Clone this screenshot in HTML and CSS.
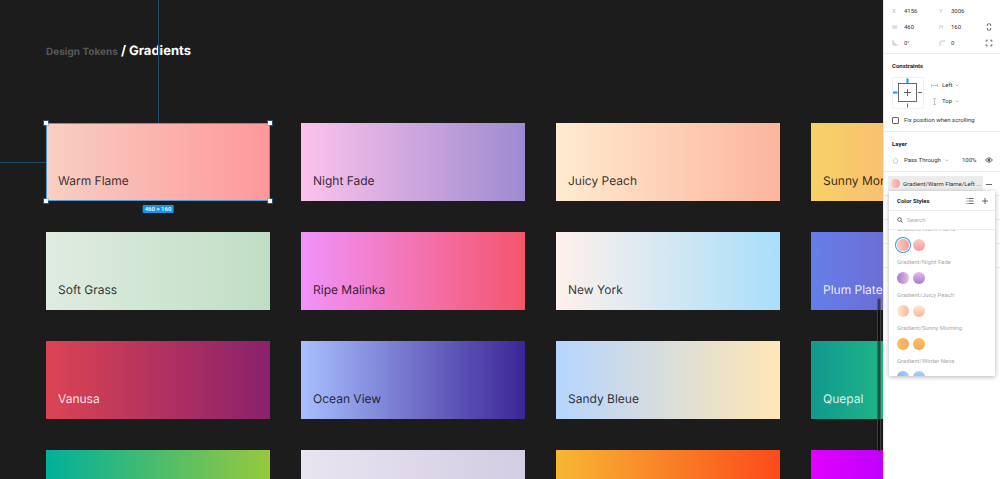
FILE: index.html
```
<!DOCTYPE html>
<html lang="en">
<head>
<meta charset="utf-8">
<title>Design Tokens / Gradients</title>
<link rel="stylesheet" href="styles.css">
</head>
<body>
<div class="app">
  <main class="canvas">
    <h1 class="title"><span class="title-group">Design Tokens</span> / Gradients</h1>
    <div class="cards">
      <div class="card warm-flame selected">Warm Flame
        <i class="guide guide-top"></i><i class="guide guide-left"></i>
        <i class="handle tl"></i><i class="handle tr"></i><i class="handle bl"></i><i class="handle br"></i>
        <span class="size-badge">460 × 160</span>
      </div>
      <div class="card night-fade">Night Fade</div>
      <div class="card juicy-peach">Juicy Peach</div>
      <div class="card sunny-morning">Sunny Morning</div>
      <div class="card soft-grass">Soft Grass</div>
      <div class="card ripe-malinka">Ripe Malinka</div>
      <div class="card new-york">New York</div>
      <div class="card plum-plate light">Plum Plate</div>
      <div class="card vanusa light">Vanusa</div>
      <div class="card ocean-view">Ocean View</div>
      <div class="card sandy-bleue">Sandy Bleue</div>
      <div class="card quepal light">Quepal</div>
      <div class="card green-lime"></div>
      <div class="card lilac"></div>
      <div class="card orange-red"></div>
      <div class="card magenta"></div>
    </div>
    <div class="scrollbar"></div>
  </main>

  <aside class="panel">
    <section class="section props">
      <label class="prop"><span>X</span><input value="4156"></label>
      <label class="prop"><span>Y</span><input value="3006"></label>
      <i></i>
      <label class="prop"><span>W</span><input value="460"></label>
      <label class="prop"><span>H</span><input value="160"></label>
      <button class="icon-btn" aria-label="Constrain proportions"><svg width="8" height="8" viewBox="0 0 8 8"><path d="M2.300 3V2a1.200 1.200 0 0 1 1.200-1.200h1A1.200 1.200 0 0 1 5.700 2v1M2.300 5v1a1.200 1.200 0 0 0 1.200 1.200h1A1.200 1.200 0 0 0 5.700 6V5"/></svg></button>
      <label class="prop"><span><svg class="faint" width="6" height="6" viewBox="0 0 6 6"><path d="M1 0v5h5M1 2.500a2.500 2.500 0 0 1 2.500 2.500"/></svg></span><input value="0°" aria-label="Rotation"></label>
      <label class="prop"><span><svg class="faint" width="6" height="6" viewBox="0 0 6 6"><path d="M1 6V3a2 2 0 0 1 2-2h3"/></svg></span><input value="0" aria-label="Corner radius"></label>
      <button class="icon-btn" aria-label="Independent corners"><svg width="8" height="8" viewBox="0 0 8 8"><path d="M1.200 2.800V1.200h1.600M5.200 1.200h1.600v1.600M6.800 5.200v1.600H5.200M2.800 6.800H1.200V5.200"/></svg></button>
    </section>

    <section class="section">
      <h2 class="heading">Constraints</h2>
      <div class="constraints">
        <svg class="widget" width="32" height="32" viewBox="0 0 32 32"><rect class="frame" x=".5" y=".5" width="31" height="31" rx="1"/><rect x="6.500" y="6.500" width="18" height="18"/><path d="M12 15.500h7M15.500 12v7M26 15.500h4M15.500 26.500v4"/><path class="active" d="M1 15.500h4.500M15.500 1.500V6"/></svg>
        <div class="constraint-list">
          <button class="drop"><svg class="faint" width="7" height="7" viewBox="0 0 7 7"><path d="M.5 2v3M6.500 2v3M.5 3.500h6"/></svg>Left<svg class="chevron" width="4" height="4" viewBox="0 0 4 4"><path d="M.5 1.500 2 3l1.500-1.500"/></svg></button>
          <button class="drop"><svg class="faint" width="7" height="7" viewBox="0 0 7 7"><path d="M2 .5h3M2 6.500h3M3.500.5v6"/></svg>Top<svg class="chevron" width="4" height="4" viewBox="0 0 4 4"><path d="M.5 1.500 2 3l1.500-1.500"/></svg></button>
        </div>
      </div>
      <label class="fix"><input type="checkbox">Fix position when scrolling</label>
    </section>

    <section class="section layer">
      <h2 class="heading">Layer</h2>
      <div class="layer-row">
        <button class="drop blend"><svg class="faint" width="7" height="7" viewBox="0 0 7 7"><path d="M3.500.8C4.500 2 5.600 3 5.600 4.300a2.100 2.100 0 0 1-4.200 0C1.400 3 2.500 2 3.500.8z"/></svg>Pass Through<svg class="chevron" width="4" height="4" viewBox="0 0 4 4"><path d="M.5 1.500 2 3l1.500-1.500"/></svg></button>
        <input class="opacity" value="100%" aria-label="Opacity">
        <button class="icon-btn" aria-label="Toggle visibility"><svg width="8" height="8" viewBox="0 0 8 8"><path d="M.6 4C2.200 1.200 5.800 1.200 7.400 4 5.800 6.800 2.200 6.800.6 4z"/><circle class="solid" cx="4" cy="4" r="1"/></svg></button>
      </div>
    </section>

    <section class="fill">
      <button class="fill-chip"><i class="swatch warm-flame"></i>Gradient/Warm Flame/Left ...</button>
      <button class="icon-btn" aria-label="Detach style"><svg width="8" height="8" viewBox="0 0 8 8"><path d="M1 4.500h6"/></svg></button>

      <div class="popover">
        <header class="pop-head">
          <h2 class="heading">Color Styles</h2>
          <button class="icon-btn" aria-label="List view"><svg width="8" height="8" viewBox="0 0 8 8"><path d="M2.500 1.500h5M2.500 4h5M2.500 6.500h5M.5 1.500h1M.5 4h1M.5 6.500h1"/></svg></button>
          <button class="icon-btn" aria-label="Add style"><svg width="8" height="8" viewBox="0 0 8 8"><path d="M1 4h6M4 1v6"/></svg></button>
        </header>
        <label class="search"><svg width="6" height="6" viewBox="0 0 6 6"><circle cx="2.500" cy="2.500" r="1.800"/><path d="m4 4 1.700 1.700"/></svg><input type="search" placeholder="Search" aria-label="Search"></label>
        <div class="styles">
          <div class="group"><h3>Gradient/Warm Flame</h3><div class="pair"><button class="swatch warm-flame current" aria-label="Left"></button><button class="swatch warm-flame down" aria-label="Down"></button></div></div>
          <div class="group"><h3>Gradient/Night Fade</h3><div class="pair"><button class="swatch night" aria-label="Left"></button><button class="swatch night up" aria-label="Down"></button></div></div>
          <div class="group"><h3>Gradient/Juicy Peach</h3><div class="pair"><button class="swatch juicy-peach" aria-label="Left"></button><button class="swatch juicy-peach down" aria-label="Down"></button></div></div>
          <div class="group"><h3>Gradient/Sunny Morning</h3><div class="pair"><button class="swatch sunny" aria-label="Left"></button><button class="swatch sunny down" aria-label="Down"></button></div></div>
          <div class="group"><h3>Gradient/Winter Neva</h3><div class="pair"><button class="swatch neva" aria-label="Left"></button><button class="swatch neva up" aria-label="Down"></button></div></div>
        </div>
      </div>
    </section>
    <div class="empty-row"></div>
    <div class="empty-row"></div>
    <div class="empty-row"></div>
  </aside>
</div>
</body>
</html>
```
FILE: styles.css
```
* { box-sizing: border-box; }
body { margin: 0; font-family: Inter, "Liberation Sans", sans-serif; }
h1, h2, h3 { margin: 0; }
button, input { font: inherit; color: inherit; border: 0; padding: 0; margin: 0; background: none; }
svg { display: block; flex: none; fill: none; stroke: #444; stroke-width: .8; }

.app { display: flex; height: 100vh; overflow: hidden; }

/* Canvas */
.canvas { position: relative; flex: 1; min-width: 0; overflow: hidden; background: #1c1c1c; padding: 43px 0 0 46px; text-rendering: geometricPrecision; }
.title { color: #fff; font-size: 13px; line-height: 16px; font-weight: 700; white-space: nowrap; }
.title-group { color: #585858; font-size: 10px; }
.cards { display: grid; grid-template-columns: repeat(4, 224px); grid-auto-rows: 78px; gap: 31px; margin-top: 64px; }
.card {
  --dir: to right;
  position: relative; display: flex; align-items: flex-end; padding: 0 12px 12px;
  background: linear-gradient(var(--dir), var(--from), var(--to));
  color: rgba(0, 0, 0, .8); font-size: 12px; line-height: 16px;
}
.title + .cards { margin-top: 63px; }
.card.light { color: rgba(255, 255, 255, .87); }

.warm-flame { --from: #f8d0c2; --to: #ff979b; }
.night-fade { --from: #fdc2ec; --to: #9d8bd0; }
.juicy-peach { --from: #ffebd0; --to: #fcb49d; }
.sunny-morning { --from: #f7d166; --to: #fb9c88; }
.soft-grass { --from: #dfece0; --to: #c0dec4; }
.ripe-malinka { --from: #f093fb; --to: #f5556c; }
.new-york { --from: #fff0eb; --to: #a8dffb; }
.plum-plate { --from: #667eea; --to: #764ba2; }
.vanusa { --from: #dc4453; --to: #89216b; }
.ocean-view { --from: #a8bfff; --to: #3c2596; }
.sandy-bleue { --from: #b5d5ff; --to: #ffe6b5; }
.quepal { --from: #11998e; --to: #38ef7d; }
.green-lime { --from: #00b09b; --to: #96c93d; }
.lilac { --from: #e9e4f0; --to: #d3cce3; }
.orange-red { --from: #f7b733; --to: #fc4a1a; }
.magenta { --from: #e100ff; --to: #7f00ff; }
.night { --from: #a080ca; --to: #edb8e8; }
.sunny { --from: #f8c45c; --to: #f3a55e; }
.neva { --from: #84b3f8; --to: #aad2fb; }

.selected { outline: 1px solid #4c9fdb; outline-offset: -1px; }
.guide { position: absolute; background: #1d4b69; }
.guide-top { left: 50%; bottom: 100%; width: 1px; height: 100vh; }
.guide-left { right: 100%; top: 50%; width: 100vw; height: 1px; }
.handle { position: absolute; width: 4px; height: 4px; background: #fff; box-shadow: 0 0 0 1px rgba(76, 159, 219, .4); }
.tl { left: -2px; top: -2px; }
.tr { right: -2px; top: -2px; }
.bl { left: -2px; bottom: -2px; }
.br { right: -2px; bottom: -2px; }
.size-badge {
  position: absolute; left: 50%; top: calc(100% + 4px); transform: translateX(-50%);
  padding: 0 2px; border-radius: 1px; background: #1a94e6; color: #fff;
  font-family: Roboto, "Liberation Sans", sans-serif; font-weight: 500; text-rendering: auto;
  font-size: 6px; line-height: 8px; white-space: nowrap;
}
.scrollbar { position: absolute; right: 2px; top: 298px; width: 4px; height: 154px; border: 1px solid rgba(150, 150, 150, .35); border-radius: 2px; background: rgba(0, 0, 0, .5); }

/* Properties panel */
.panel { flex: none; width: 117px; background: #fff; border-left: 1px solid #e5e5e5; color: #333; font-family: Roboto, "Liberation Sans", sans-serif; font-size: 6px; line-height: 8px; }
.section { padding: 8px 6px 7px 8px; border-bottom: 1px solid #ececec; }
.heading { font-size: 6px; line-height: 8px; font-weight: 700; color: #222; }
.icon-btn { flex: none; display: flex; align-items: center; justify-content: center; width: 10px; height: 10px; }
.faint, .chevron { stroke: #b9b9b9; }
.solid { fill: #444; }

.props { display: grid; grid-template-columns: 47px 1fr 10px; grid-auto-rows: 16px; align-items: center; padding: 3px 6px 2px 8px; }
.prop { display: flex; align-items: center; }
.prop span { flex: none; width: 12px; color: #b9b9b9; }
.prop input { width: 100%; min-width: 0; }

.constraints { display: flex; gap: 7px; margin-top: 7px; }
.widget .frame { stroke: #ececec; }
.widget .active { stroke: #18a0c8; stroke-width: 2; }
.constraint-list { display: flex; flex-direction: column; gap: 8px; padding-top: 4px; }
.drop { display: flex; align-items: center; gap: 4px; height: 8px; }
.drop .chevron { margin-left: -1px; }
.fix { display: flex; align-items: center; gap: 4px; margin-top: 7px; }
.fix input { appearance: none; width: 7px; height: 7px; margin: 0 1px 0 0; border: 1px solid #666; border-radius: 1px; }

.layer { padding-bottom: 6px; }
.layer-row { display: flex; align-items: center; margin-top: 7px; }
.blend { flex: none; gap: 5px; }
.opacity { width: 18px; margin-left: auto; }
.layer-row .icon-btn { margin-left: 4px; }

.fill { position: relative; display: flex; align-items: center; justify-content: space-between; height: 24px; padding: 0 6px 0 4px; border-bottom: 1px solid #ececec; }
.fill-chip { display: flex; align-items: center; gap: 3px; height: 15px; padding: 0 2px 0 3px; background: #ececec; white-space: nowrap; }
.fill-chip .swatch { width: 9px; height: 9px; }
.empty-row { height: 24px; border-bottom: 1px solid #ececec; }

.swatch { --dir: to right; flex: none; width: 12px; height: 12px; border-radius: 50%; background: linear-gradient(var(--dir), var(--from), var(--to)); }
.swatch.down { --dir: to bottom; }
.swatch.up { --dir: to top; }
.swatch.current { box-shadow: 0 0 0 1px #fff, 0 0 0 2px #3b9cc4; }

/* Color styles popover */
.popover { position: absolute; right: 5px; top: 19px; width: 106px; height: 185px; overflow: hidden; border-radius: 1px; background: #fff; box-shadow: 0 1px 5px rgba(0, 0, 0, .3); }
.pop-head { display: flex; align-items: center; gap: 5px; height: 20px; padding: 0 5px 0 8px; border-bottom: 1px solid #ececec; }
.pop-head .heading { flex: 1; }
.search { display: flex; align-items: center; gap: 4px; height: 19px; padding: 0 8px; border-bottom: 1px solid #ececec; }
.search input { flex: 1; min-width: 0; outline: 0; }
.search input::placeholder { color: #b0b0b0; }
.styles { height: 146px; overflow: hidden; padding: 0 8px; }
.group { display: grid; gap: 4px; height: 33px; align-content: start; }
.group:first-child { margin-top: -6px; }
.group h3 { font-size: 6px; line-height: 10px; font-weight: 400; color: #aaa; white-space: nowrap; }
.pair { display: flex; align-items: center; gap: 4px; height: 14px; }
```
